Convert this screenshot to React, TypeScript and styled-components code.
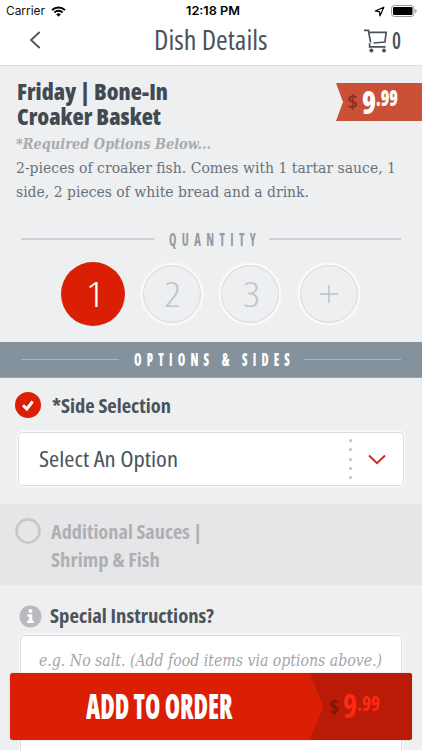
import React, { useLayoutEffect, useRef, useState } from "react";
import styled, { createGlobalStyle, css } from "styled-components";

const Global = createGlobalStyle`
  * { box-sizing: border-box; }
  html, body { margin: 0; background: #edeff1; }
`;

type Face = "sans" | "serif" | "system";

const faces = {
  sans: '"Open Sans", "Noto Sans", sans-serif',
  serif: '"DejaVu Serif", serif',
  system: 'Inter, "Liberation Sans", sans-serif',
};

interface TypeProps {
  $size: number;
  $line: number;
  $width: number;
  $color: string;
  $face?: Face;
  $weight?: number;
  $italic?: boolean;
  $spacing?: number;
}

const LineBox = styled.span<TypeProps>`
  display: block;
  flex: none;
  width: ${(p) => p.$width}px;
  height: ${(p) => p.$line}px;
  font-family: ${(p) => faces[p.$face ?? "sans"]};
  font-size: ${(p) => p.$size}px;
  font-weight: ${(p) => p.$weight ?? 400};
  font-stretch: ${(p) => (p.$face === "system" ? "100%" : "75%")};
  font-style: ${(p) => (p.$italic ? "italic" : "normal")};
  letter-spacing: ${(p) => p.$spacing ?? 0}px;
  line-height: ${(p) => p.$line}px;
  color: ${(p) => p.$color};
  white-space: nowrap;
`;

const LineText = styled.span`
  display: inline-block;
  vertical-align: top;
  transform-origin: 0 50%;
`;

/* One line of type, condensed horizontally to the measure it is given. */
function Line({ children, ...type }: TypeProps & { children: string }) {
  const ref = useRef<HTMLSpanElement>(null);
  const [scale, setScale] = useState(1);
  useLayoutEffect(() => {
    if (ref.current) {
      setScale(type.$width / parseFloat(getComputedStyle(ref.current).width));
    }
  }, [type.$width]);
  return (
    <LineBox {...type}>
      <LineText ref={ref} style={{ transform: `scaleX(${scale})` }}>
        {children}
      </LineText>
    </LineBox>
  );
}

const Screen = styled.main`
  position: relative;
  width: 422px;
  height: 750px;
  overflow: hidden;
  background: #edeff1;
`;

const Header = styled.header`
  height: 66px;
  background: #fff;
  border-bottom: 1px solid #dcdde0;
`;

const StatusBar = styled.div`
  display: grid;
  grid-template-columns: 186px 1fr auto;
  align-items: center;
  height: 22px;
  padding: 0 5px 0 0;
`;

const StatusGroup = styled.div<{ $gap: number; $left?: number }>`
  display: flex;
  align-items: center;
  gap: ${(p) => p.$gap}px;
  padding-left: ${(p) => p.$left ?? 0}px;
`;

const NavBar = styled.nav`
  display: flex;
  align-items: center;
  height: 36px;
`;

const BackButton = styled.button`
  width: 154px;
  padding: 0 0 0 29px;
  border: 0;
  background: none;
  line-height: 0;
  text-align: left;
`;

const CartButton = styled.button`
  display: flex;
  align-items: center;
  gap: 4px;
  margin-left: 96px;
  padding: 0;
  border: 0;
  background: none;
`;

const Summary = styled.section`
  display: flex;
  justify-content: space-between;
  height: 154px;
  padding: 12.5px 0 0 16px;
`;

const Copy = styled.div`
  display: flex;
  flex-direction: column;
  width: 320px;
`;

const Ribbon = styled.div`
  flex: none;
  width: 86px;
  height: 38px;
  margin-top: 4.5px;
  padding-left: 11px;
  display: flex;
  background: #cb5038;
  clip-path: polygon(0 0, 100% 0, 100% 100%, 0 100%, 7px 50%);
`;

const Shift = styled.div<{ $top?: number; $left?: number; $right?: number }>`
  margin: ${(p) => p.$top ?? 0}px ${(p) => p.$right ?? 0}px 0 ${(p) => p.$left ?? 0}px;
`;

const Divider = styled.div<{ $bar?: boolean }>`
  display: flex;
  align-items: center;
  height: 38px;
  padding: 0 21px;
  ${(p) =>
    p.$bar &&
    css`
      height: 36px;
      background: #84929d;
      border-bottom: 1px solid #97a2ab;
    `}
`;

const Rule = styled.i<{ $color: string }>`
  flex: 1;
  height: 1.5px;
  background: ${(p) => p.$color};
`;

const Quantities = styled.div`
  display: flex;
  gap: 14.5px;
  height: 84px;
  padding: 4px 0 0 61px;
`;

const Quantity = styled.button<{ $active?: boolean }>`
  display: flex;
  align-items: center;
  justify-content: center;
  width: 64px;
  height: 64px;
  padding: 0;
  border: 0;
  border-radius: 50%;
  background: ${(p) => (p.$active ? "#da1f05" : "transparent")};
  ${(p) =>
    !p.$active &&
    css`
      box-shadow: inset 0 0 0 1px #f2f3f5, inset 0 0 0 3px #fafafb,
        inset 0 0 0 4px #d9dadd;
    `}
`;

const OptionRow = styled.div<{ $disabled?: boolean }>`
  display: flex;
  align-items: ${(p) => (p.$disabled ? "flex-start" : "center")};
  gap: ${(p) => (p.$disabled ? 10 : 11)}px;
  height: ${(p) => (p.$disabled ? 81 : 54)}px;
  padding: ${(p) => (p.$disabled ? "14px 0 0 15px" : "0 0 0 15px")};
  background: ${(p) => (p.$disabled ? "#e6e6e8" : "transparent")};
`;

const Stack = styled.div`
  display: flex;
  flex-direction: column;
`;

const SelectBox = styled.button`
  display: flex;
  align-items: center;
  width: 386px;
  height: 54px;
  margin: 0 0 17.5px 18px;
  padding: 0 0 0 20px;
  border: 1px solid #dcdde0;
  border-radius: 4px;
  background: #fff;
  box-shadow: 0 0 0 1.5px #f8f9fa;
  text-align: left;
`;

const Dots = styled.div`
  display: flex;
  flex-direction: column;
  gap: 6.2px;
  margin-left: 170.5px;
`;

const Dot = styled.i`
  width: 3px;
  height: 3px;
  border-radius: 50%;
  background: #bfc0c2;
`;

const ChevronSlot = styled.span`
  margin-left: 16px;
  line-height: 0;
`;

const NoteHead = styled.div`
  display: flex;
  align-items: center;
  gap: 8px;
  height: 50px;
  padding: 13px 0 0 18.5px;
`;

const NoteBox = styled.div`
  width: 382px;
  height: 160px;
  margin-left: 20px;
  padding: 12px 0 0 18px;
  border: 1px solid #dadcdf;
  border-radius: 4px;
  background: #fff;
  box-shadow: 0 0 0 1.5px #f6f7f8;
`;

const OrderButton = styled.button`
  position: absolute;
  left: 10px;
  bottom: 10px;
  display: flex;
  width: 402px;
  height: 67px;
  padding: 0 0 0 75px;
  border: 0;
  border-radius: 3px;
  overflow: hidden;
  background: #da1f05;
  box-shadow: 0 0 1px rgba(120, 20, 0, 0.5);
  text-align: left;
`;

const OrderPrice = styled.div`
  display: flex;
  width: 103px;
  height: 67px;
  margin-left: 78px;
  padding-left: 19px;
  background: #b91b06;
  clip-path: polygon(0 0, 100% 0, 100% 100%, 0 100%, 13px 50%);
`;

const ink = "#4b535b";

export default function App() {
  return (
    <>
      <Global />
      <Screen>
        <Header>
          <StatusBar>
            <StatusGroup $gap={6} $left={6}>
              <Line $face="system" $size={11.8} $line={22} $width={39} $color="#111">Carrier</Line>
              <svg width="15" height="11" viewBox="0 0 15 11" fill="none" stroke="#000" strokeWidth="2">
                <path d="M1 4.1a9.3 9.3 0 0 1 13 0M3.4 6.5a5.9 5.9 0 0 1 8.2 0" />
                <path d="M7.5 10.7L5.2 8.3a3.3 3.3 0 0 1 4.6 0z" fill="#000" stroke="none" />
              </svg>
            </StatusGroup>
            <Line $face="system" $size={11.8} $line={22} $width={54} $weight={600} $color="#000">12:18 PM</Line>
            <StatusGroup $gap={6}>
              <svg width="11" height="11" viewBox="0 0 11 11" fill="none" stroke="#000" strokeWidth="1.2" strokeLinejoin="round">
                <path d="M9.8 1.2L1.2 5l4.2.6.6 4.2z" />
              </svg>
              <svg width="26" height="12" viewBox="0 0 26 12">
                <rect x=".5" y=".5" width="22.5" height="11" rx="3" fill="#fff" stroke="#999" />
                <rect x="2" y="2" width="19.5" height="8" rx="1.3" />
                <path d="M24.2 4v4q1.5-.6 1.5-2t-1.5-2z" fill="#999" />
              </svg>
            </StatusGroup>
          </StatusBar>
          <NavBar>
            <BackButton aria-label="Back">
              <svg width="12" height="18" viewBox="0 0 12 18" fill="none" stroke={ink} strokeWidth="1.8">
                <path d="M10.7 1L2 9l8.7 8" />
              </svg>
            </BackButton>
            <Line $size={26.5} $line={36} $width={113.5} $color={ink}>Dish Details</Line>
            <CartButton aria-label="Cart">
              <Shift $top={5}>
                <svg width="24" height="24" viewBox="0 0 24 24" fill="none" stroke={ink} strokeWidth="1.7">
                  <path d="M0 1.4h4.4l2.2 12.2M5.3 3.4h16.9l-1.3 9.6-11.4 1M5.6 14.2v3.6h16" />
                  <circle cx="7.4" cy="21.6" r="2" fill={ink} stroke="none" />
                  <circle cx="20" cy="21.6" r="2" fill={ink} stroke="none" />
                </svg>
              </Shift>
              <Line $size={23} $line={36} $width={9} $weight={600} $color={ink}>0</Line>
            </CartButton>
          </NavBar>
        </Header>

        <Summary>
          <Copy>
            <Shift $left={0.6}>
              <Line $size={23} $line={25.5} $width={151} $weight={800} $color="#414a51">Friday | Bone-In</Line>
              <Line $size={23} $line={25.5} $width={144} $weight={800} $color="#414a51">Croaker Basket</Line>
            </Shift>
            <Shift $top={2.5}>
              <Line $face="serif" $size={15.3} $line={24} $width={195} $weight={700} $italic $color="#a8abaf">*Required Options Below...</Line>
            </Shift>
            <Line $face="serif" $size={15.5} $line={24} $width={380} $color="#68727c">2-pieces of croaker fish. Comes with 1 tartar sauce, 1</Line>
            <Line $face="serif" $size={15.5} $line={24} $width={293} $color="#68727c">side, 2 pieces of white bread and a drink.</Line>
          </Copy>
          <Ribbon>
            <Shift $top={1}>
              <Line $size={20} $line={36} $width={11} $weight={700} $color="#8f321f">$</Line>
            </Shift>
            <Shift $left={4}>
              <Line $size={32} $line={37} $width={14} $weight={800} $color="#fff">9</Line>
            </Shift>
            <Line $size={22} $line={29} $width={22} $weight={800} $color="#fff">.99</Line>
          </Ribbon>
        </Summary>

        <Divider>
          <Rule $color="#cfd0d3" />
          <Shift $left={15} $right={8}>
            <Line $size={17.5} $line={36} $width={92} $weight={700} $spacing={7.5} $color="#96999d">QUANTITY</Line>
          </Shift>
          <Rule $color="#cfd0d3" />
        </Divider>

        <Quantities>
          <Quantity $active>
            <Line $size={35} $line={60} $width={18} $weight={300} $color="#fff">1</Line>
          </Quantity>
          <Quantity>
            <Line $size={35} $line={60} $width={17} $weight={300} $color="#bfc5cb">2</Line>
          </Quantity>
          <Quantity>
            <Line $size={35} $line={60} $width={17} $weight={300} $color="#bfc5cb">3</Line>
          </Quantity>
          <Quantity aria-label="More">
            <svg width="18" height="18" viewBox="0 0 18 18" stroke="#b9bfc6" strokeWidth="1.4">
              <path d="M9 0v18M0 9h18" />
            </svg>
          </Quantity>
        </Quantities>

        <Divider $bar>
          <Rule $color="#aab4bc" />
          <Shift $left={15} $right={9}>
            <Line $size={17.5} $line={35} $width={161} $weight={800} $spacing={7.5} $color="#fff">OPTIONS &amp; SIDES</Line>
          </Shift>
          <Rule $color="#aab4bc" />
        </Divider>

        <OptionRow>
          <svg width="26" height="26" viewBox="0 0 26 26">
            <circle cx="13" cy="13" r="13" fill="#da1f05" />
            <path d="M8 13.2l3.8 3.8 5.8-7.5" fill="none" stroke="#fff" strokeWidth="3" />
          </svg>
          <Shift $top={1.5}>
            <Line $size={20} $line={54} $width={119} $weight={700} $color={ink}>*Side Selection</Line>
          </Shift>
        </OptionRow>

        <SelectBox>
          <Line $size={21} $line={52} $width={139} $color={ink}>Select An Option</Line>
          <Dots>
            <Dot /><Dot /><Dot /><Dot /><Dot />
          </Dots>
          <ChevronSlot>
            <svg width="18" height="11" viewBox="0 0 18 11" fill="none" stroke="#c72c19" strokeWidth="1.9">
              <path d="M1 1.5l8 7.6 8-7.6" />
            </svg>
          </ChevronSlot>
        </SelectBox>

        <OptionRow $disabled>
          <svg width="26" height="26" viewBox="0 0 26 26">
            <circle cx="13" cy="13" r="11.6" fill="none" stroke="#c7c8ca" strokeWidth="2.6" />
          </svg>
          <Stack>
            <Line $size={20} $line={28} $width={151} $weight={700} $color="#aeb0b4">Additional Sauces |</Line>
            <Line $size={20} $line={28} $width={109} $weight={700} $color="#aeb0b4">Shrimp &amp; Fish</Line>
          </Stack>
        </OptionRow>

        <NoteHead>
          <svg width="23" height="23" viewBox="0 0 23 23">
            <circle cx="11.5" cy="11.5" r="11" fill="#b9babd" />
            <circle cx="11.4" cy="5.9" r="2" fill="#fff" />
            <path d="M8.3 9.3h5v6.5h1.6V18H8.1v-2.2h1.7v-4.2H8.3z" fill="#fff" />
          </svg>
          <Line $size={20} $line={36} $width={164} $weight={700} $color={ink}>Special Instructions?</Line>
        </NoteHead>
        <NoteBox>
          <Line $face="serif" $size={16} $line={26} $width={343} $italic $color="#a2a6ab">e.g. No salt. (Add food items via options above.)</Line>
        </NoteBox>

        <OrderButton>
          <Shift $left={0.5}>
            <Line $size={35.5} $line={65} $width={146.5} $weight={800} $color="#fff">ADD TO ORDER</Line>
          </Shift>
          <OrderPrice>
            <Line $size={20} $line={67} $width={10} $weight={600} $color="#7b1408">$</Line>
            <Shift $left={4}>
              <Line $size={33} $line={66} $width={14} $weight={700} $color="#ff2a13">9</Line>
            </Shift>
            <Line $size={22} $line={58} $width={23} $weight={700} $color="#ff2a13">.99</Line>
          </OrderPrice>
        </OrderButton>
      </Screen>
    </>
  );
}
